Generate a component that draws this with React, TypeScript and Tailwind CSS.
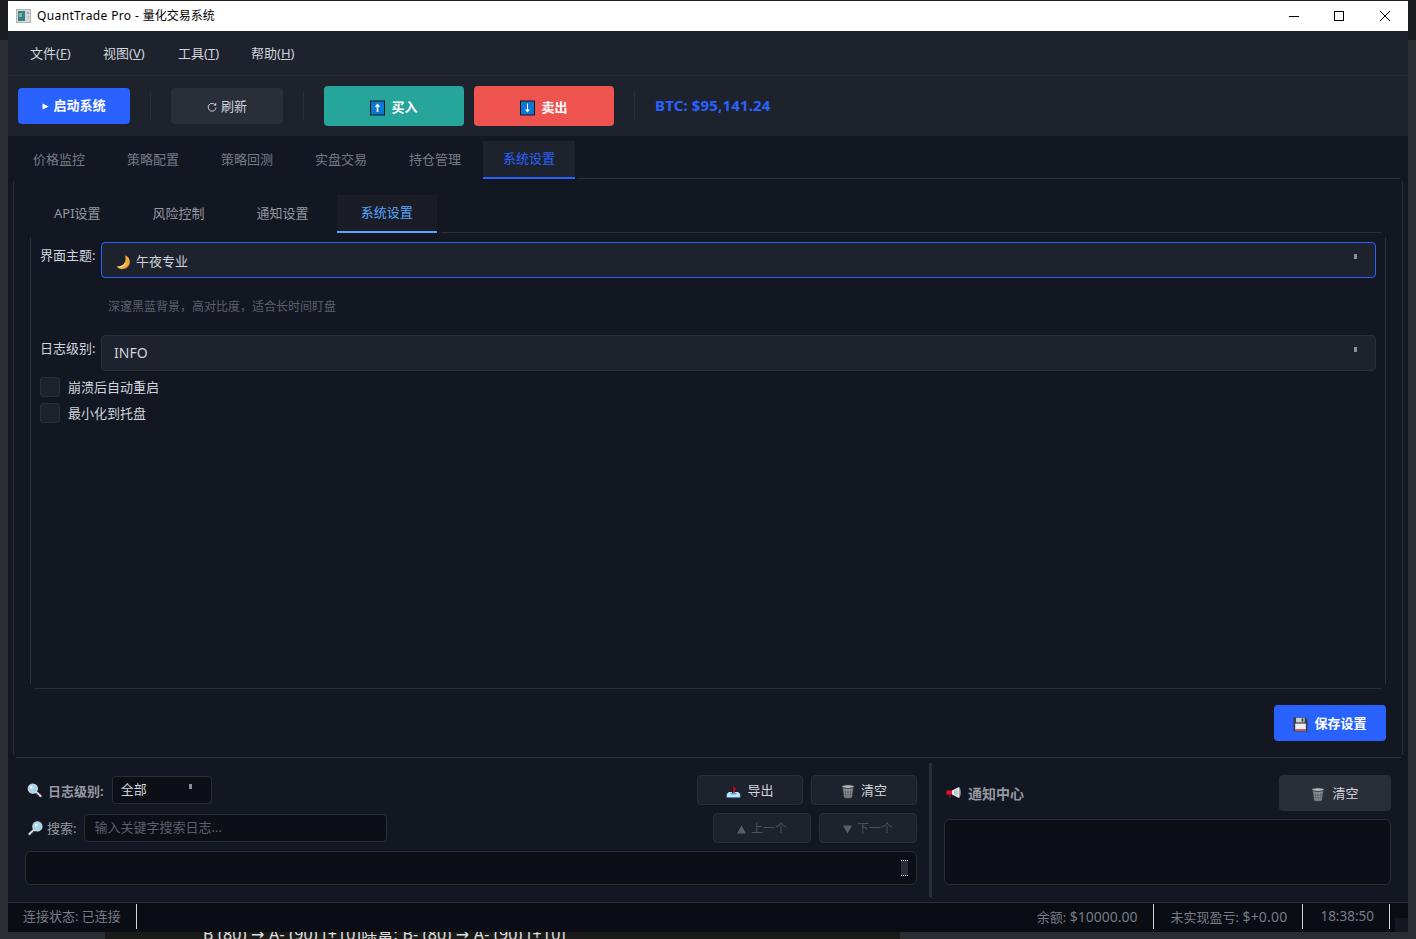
import React from "react";

const FONT = "font-['Noto_Sans','Noto_Sans_CJK_SC',sans-serif]";

const Moon = () => (
  <svg width="15" height="15" viewBox="0 0 15 15" className="shrink-0">
    <path d="M9 0.6 C13 1.6 15 6 13.2 9.8 C11.4 13.6 6.8 15 3.2 13.4 C2.2 13 1.4 12.2 0.8 11.2 C4.4 12 7.4 10.6 8.8 7.6 C9.8 5.4 9.8 2.8 9 0.6 Z" fill="#f4a93c" />
    <path d="M0.8 11.2 C4.4 12 7.4 10.6 8.8 7.6 L10 8.4 C8.4 11.8 4.6 13 2 12.4 Z" fill="#ffd27a" />
    <path d="M3.2 13.4 C6.8 15 11.4 13.6 13.2 9.8 L13.4 11 C11 14.4 6.4 15.4 3.2 13.4 Z" fill="#4a4a4a" />
  </svg>
);

const SearchLeft = () => (
  <svg width="15" height="15" viewBox="0 0 15 15" className="shrink-0">
    <path d="M8.4 8.6 L13.4 13" stroke="#d6d8dc" strokeWidth="2.4" strokeLinecap="round" />
    <path d="M9 10 L12.6 13.6" stroke="#55585e" strokeWidth="1" />
    <circle cx="5.8" cy="5.6" r="4.6" fill="#9fd4ec" stroke="#d5dde2" strokeWidth="1.1" />
    <circle cx="4.4" cy="4.2" r="1.5" fill="#e6f6fc" />
  </svg>
);

const SearchRight = () => (
  <svg width="15" height="15" viewBox="0 0 15 15" className="shrink-0">
    <path d="M6.4 8.6 L1.6 13" stroke="#d6d8dc" strokeWidth="2.4" strokeLinecap="round" />
    <path d="M6 10 L2.4 13.6" stroke="#55585e" strokeWidth="1" />
    <circle cx="9.4" cy="5.4" r="4.6" fill="#9fd4ec" stroke="#d5dde2" strokeWidth="1.1" />
    <circle cx="8.2" cy="4" r="1.5" fill="#e6f6fc" />
  </svg>
);

const Outbox = () => (
  <svg width="15" height="15" viewBox="0 0 15 15" className="shrink-0">
    <path d="M0.8 10 L3 8 H12 L14.2 10 V13.4 H0.8 Z" fill="#bfe6f7" />
    <path d="M0.8 13 H14.2 V14 H0.8 Z" fill="#3a86b8" />
    <path d="M4 9 H11 L10 10.6 H5 Z" fill="#4aa8dc" />
    <path d="M7.5 2 L10.8 5.4 H9 V8.8 H6 V5.4 H4.2 Z" fill="#a3121f" />
    <path d="M7.5 2 L4.2 5.4 H6 V8.8 H7 V2.6 Z" fill="#3a0a10" />
  </svg>
);

const Trash = () => (
  <svg width="14" height="15" viewBox="0 0 14 15" className="shrink-0">
    <ellipse cx="7" cy="2.6" rx="6" ry="1.7" fill="#b8bcbf" stroke="#3e4347" strokeWidth="0.6" />
    <path d="M1.6 3.6 L3 13.4 C3.6 14.4 10.4 14.4 11 13.4 L12.4 3.6 C10 4.8 4 4.8 1.6 3.6 Z" fill="#8b9194" stroke="#2d3135" strokeWidth="0.6" />
    <path d="M4 5.5 L5 13 M7 5.7 V13.4 M10 5.5 L9 13 M2.6 7.5 C6 8.6 8 8.6 11.4 7.5 M3 10.2 C6 11.2 8 11.2 11 10.2" stroke="#555b5f" strokeWidth="0.7" fill="none" />
  </svg>
);

const Megaphone = () => (
  <svg width="16" height="14" viewBox="0 0 16 14" className="shrink-0">
    <path d="M0.5 4.5 H6 V8.5 H0.5 Z" fill="#e8112d" />
    <path d="M2.5 8.5 H5 L4.4 11.6 H3 Z" fill="#8f1420" />
    <path d="M6 4.5 L13 1 V12 L6 8.5 Z" fill="#e4e6e8" />
    <path d="M13 1 C15.4 2.6 15.4 10.4 13 12 Z" fill="#9aa0a4" />
    <path d="M8 5 L11.5 3.4 V9.6 L8 8 Z" fill="#bfc3c6" />
  </svg>
);

const Floppy = () => (
  <svg width="15" height="15" viewBox="0 0 15 15" className="shrink-0">
    <path d="M0.5 0.5 H12.6 L14.5 2.4 V14.5 H0.5 Z" fill="#3a3f46" />
    <rect x="3" y="0.8" width="8.6" height="4.6" fill="#c9ced3" />
    <rect x="8.6" y="1.4" width="1.8" height="3.2" fill="#3a3f46" />
    <rect x="2.2" y="6.6" width="10.6" height="7" fill="#eceef0" />
    <rect x="2.2" y="12.2" width="10.6" height="1.4" fill="#d0314a" />
  </svg>
);

const ArrowBox = ({ down }: { down?: boolean }) => (
  <svg width="15" height="16" viewBox="0 0 15 16" className="shrink-0">
    <rect x="0" y="0.5" width="15" height="15" fill="#17171c" />
    <rect x="1" y="1.5" width="13" height="13" fill="#0b78d4" />
    {down ? (
      <path d="M7 3.5 H8 V9.5 H10 L7.5 12.5 L5 9.5 H7 Z" fill="#ffffff" />
    ) : (
      <path d="M7.5 3.5 L10.3 6.8 H8.3 V12 H6.7 V6.8 H4.7 Z" fill="#ffffff" />
    )}
  </svg>
);

const Refresh = () => (
  <svg width="10" height="10" viewBox="0 0 10 10" className="shrink-0">
    <path d="M8.4 3.2 A3.9 3.9 0 1 0 9 5.6" fill="none" stroke="#d1d4dc" strokeWidth="1" />
    <path d="M6.4 3.4 H9.2 V0.8 Z" fill="#d1d4dc" />
  </svg>
);

const Arrow = () => <span className="w-[3px] h-[5px] mb-[7px] bg-[#8a8e98] shrink-0" />;

function Select({ active, children }: { active?: boolean; children: React.ReactNode }) {
  return (
    <div
      className={
        "flex-1 h-9 rounded-[4px] bg-[#1e222d] border pl-3 pr-[18px] flex items-center justify-between text-[13px] text-[#d1d4dc] " +
        (active ? "border-[#2962ff]" : "border-[#2a2e39]")
      }
    >
      <div className="flex items-center gap-[5px]">{children}</div>
      <Arrow />
    </div>
  );
}

function Check({ label }: { label: string }) {
  return (
    <div className="flex items-center gap-2 h-5 text-[13px] text-[#d1d4dc]">
      <span className="w-5 h-5 rounded-[3px] bg-[#1e222d] border border-[#2a2e39]" />
      <span className="pt-[2px]">{label}</span>
    </div>
  );
}

function MainTab({ label, active }: { label: string; active?: boolean }) {
  return (
    <div
      className={
        "w-[92px] mr-[2px] h-[38px] flex items-center justify-center text-[13px] " +
        (active ? "bg-[#1e222d] text-[#2962ff] border-b-2 border-[#2962ff]" : "text-[#787b86]")
      }
    >
      {label}
    </div>
  );
}

function SubTab({ label, active }: { label: string; active?: boolean }) {
  return (
    <div
      className={
        "px-6 mr-1 h-[38px] flex items-center justify-center text-[13px] " +
        (active ? "bg-[#1a1d26] text-[#58a6ff] border-b-2 border-[#58a6ff]" : "text-[#9598a1]")
      }
    >
      {label}
    </div>
  );
}

function GhostBtn({ children, className }: { children: React.ReactNode; className: string }) {
  return (
    <div className={"h-[30px] rounded-[4px] border flex items-center justify-center " + className}>
      {children}
    </div>
  );
}

const Sep = () => <span className="block w-px h-[25px] bg-[#d4d4d4] shrink-0" />;

export default function App() {
  return (
    <div className={"w-[1416px] h-[939px] overflow-hidden pt-px bg-[linear-gradient(to_bottom,#1b1d21_40px,#2a2e33_40px)] " + FONT}>
      <div className="mx-2 h-[931px] flex flex-col bg-[#131722]">
        {/* title bar */}
        <div className="h-[30px] bg-white flex items-center shrink-0 pl-2 text-[12px] text-black">
          <svg width="15" height="14" viewBox="0 0 15 14" className="shrink-0">
            <rect x="0" y="0" width="15" height="14" fill="#d5dad8" stroke="#8d9693" />
            <rect x="2" y="2" width="7" height="10" fill="#3d7d83" />
            <rect x="3" y="4" width="3" height="4" fill="#79b6a8" />
            <rect x="10.5" y="3" width="3" height="2" fill="#8fb7c8" />
            <rect x="10.5" y="7" width="3" height="2" fill="#c7cfa8" />
          </svg>
          <span className="ml-[6px]"><span className="tracking-[0.37px]">QuantTrade Pro - </span>量化交易系统</span>
          <div className="flex-1" />
          <svg width="10" height="10" viewBox="0 0 10 10" className="mr-[35px]">
            <path d="M0 5.5 H10" stroke="#000" strokeWidth="1" />
          </svg>
          <svg width="10" height="10" viewBox="0 0 10 10" className="mr-[36px]">
            <rect x="0.5" y="0.5" width="9" height="9" fill="none" stroke="#000" strokeWidth="1" />
          </svg>
          <svg width="10" height="10" viewBox="0 0 10 10" className="mr-[18px]">
            <path d="M0 0 L10 10 M10 0 L0 10" stroke="#000" strokeWidth="1" />
          </svg>
        </div>

        {/* menu bar */}
        <div className="h-[45px] shrink-0 bg-[#1e222d] border-b border-[#2a2e39] flex items-center gap-8 pl-[22px] pt-px text-[13px] text-[#d1d4dc]">
          <span className="w-[41px] whitespace-nowrap">文件(<u>F</u>)</span>
          <span className="w-[43px] whitespace-nowrap">视图(<u>V</u>)</span>
          <span className="w-[41px] whitespace-nowrap">工具(<u>T</u>)</span>
          <span className="whitespace-nowrap">帮助(<u>H</u>)</span>
        </div>

        {/* toolbar */}
        <div className="h-[60px] shrink-0 bg-[#1e222d] flex items-center pl-[10px]">
          <div className="w-[112px] h-9 rounded-[4px] bg-[#2962ff] flex items-center justify-center gap-1 text-[13px] font-bold text-white">
            <svg width="7" height="7" viewBox="0 0 7 7" className="shrink-0"><path d="M0.5 0.5 L6.5 3.5 L0.5 6.5 Z" fill="#fff" /></svg>
            <span>启动系统</span>
          </div>
          <span className="w-px h-7 bg-[#2a2e39] ml-5" />
          <div className="ml-5 w-[112px] h-9 pt-[2px] rounded-[4px] bg-[#2a2e39] flex items-center justify-center gap-[4px] text-[13px] text-[#d1d4dc]">
            <Refresh />
            <span>刷新</span>
          </div>
          <span className="w-px h-7 bg-[#2a2e39] ml-5" />
          <div className="ml-5 w-[140px] h-10 pt-[3px] rounded-[4px] bg-[#26a69a] flex items-center justify-center gap-[6px] text-[13px] font-bold text-white">
            <ArrowBox />
            <span>买入</span>
          </div>
          <div className="ml-[10px] w-[140px] h-10 pt-[3px] rounded-[4px] bg-[#ef5350] flex items-center justify-center gap-[6px] text-[13px] font-bold text-white">
            <ArrowBox down />
            <span>卖出</span>
          </div>
          <span className="w-px h-7 bg-[#2a2e39] ml-5" />
          <span className="ml-5 mb-[2px] text-[15px] tracking-[0.15px] font-bold text-[#2962ff]">BTC: $95,141.24</span>
        </div>

        {/* main tabs */}
        <div className="h-[622px] shrink-0 pt-[5px] px-[5px] flex flex-col">
          <div className="flex h-[38px] shrink-0">
            <MainTab label="价格监控" />
            <MainTab label="策略配置" />
            <MainTab label="策略回测" />
            <MainTab label="实盘交易" />
            <MainTab label="持仓管理" />
            <MainTab label="系统设置" active />
            <div className="flex-1 border-b border-[#2a2e39] mr-[3px]" />
          </div>
          <div className="flex-1 min-h-0 flex flex-col">
            <div className="flex-1 min-h-0 mt-[2px] border-l border-r border-[#2a2e39] pt-[14px] px-4 flex flex-col">
              {/* sub tabs */}
              <div className="flex h-[38px] shrink-0">
                <SubTab label="API设置" />
                <SubTab label="风险控制" />
                <SubTab label="通知设置" />
                <SubTab label="系统设置" active />
                <div className="flex-1 border-b border-[#2a2e39] mr-[5px]" />
              </div>
              <div className="flex-1 min-h-0 flex flex-col">
                <div className="flex-1 min-h-0 mt-1 border-l border-r border-[#2a2e39] pt-[5px] pl-[9px] pr-[9px] flex flex-col">
                  <div className="flex">
                    <span className="w-[61px] shrink-0 pt-[4px] text-[13px] leading-[18px] text-[#d1d4dc]">界面主题:</span>
                    <Select active>
                      <span className="ml-[2px] mt-[4px]"><Moon /></span>
                      <span className="mt-[4px]">午夜专业</span>
                    </Select>
                  </div>
                  <div className="ml-[68px] mt-[20px] text-[12px] leading-[18px] text-[#5d606b]">深邃黑蓝背景，高对比度，适合长时间盯盘</div>
                  <div className="flex mt-[19px]">
                    <span className="w-[61px] shrink-0 pt-[4px] text-[13px] leading-[18px] text-[#d1d4dc]">日志级别:</span>
                    <Select>
                      <span className="-mt-[2px] text-[14px]">INFO</span>
                    </Select>
                  </div>
                  <div className="mt-[6px] flex flex-col gap-[6px]">
                    <Check label="崩溃后自动重启" />
                    <Check label="最小化到托盘" />
                  </div>
                </div>
                <div className="h-px mt-[4px] mx-[5px] bg-[#2a2e39] shrink-0" />
              </div>
              <div className="flex justify-end mt-4 mb-[14px] shrink-0">
                <div className="w-[112px] h-9 pt-[2px] rounded-[4px] bg-[#2962ff] flex items-center justify-center gap-[6px] text-[13px] font-bold text-white">
                  <Floppy />
                  <span>保存设置</span>
                </div>
              </div>
            </div>
            <div className="h-px mt-[2px] ml-[3px] mr-[2px] bg-[#2a2e39] shrink-0" />
          </div>
        </div>

        {/* log + notifications */}
        <div className="h-[144px] shrink-0 flex pt-[5px] pb-[5px]">
          <div className="w-[892px] ml-[17px] pt-3 shrink-0">
            <div className="flex items-center h-[30px] pl-[2px]">
              <SearchLeft />
              <span className="ml-[6px] mt-[3px] text-[13px] font-bold text-[#9598a1]">日志级别:</span>
              <div className="ml-2 w-[100px] h-7 rounded-[4px] bg-[#0c0f16] border border-[#2a2e39] flex items-center justify-between pl-2 pr-[19px] text-[13px] text-[#d1d4dc]">
                <span>全部</span>
                <span className="w-[3px] h-[5px] mb-[7px] bg-[#8a8e98]" />
              </div>
              <div className="flex-1" />
              <GhostBtn className="w-[106px] gap-[6px] pt-[2px] text-[13px] bg-[#1e222d] border-[#2a2e39] text-[#d1d4dc]">
                <Outbox />
                <span>导出</span>
              </GhostBtn>
              <GhostBtn className="w-[106px] ml-2 gap-[6px] pt-[2px] text-[13px] bg-[#1e222d] border-[#2a2e39] text-[#d1d4dc]">
                <Trash />
                <span>清空</span>
              </GhostBtn>
            </div>
            <div className="flex items-center h-[30px] mt-2 pl-[3px]">
              <SearchRight />
              <span className="ml-1 mt-[2px] text-[13px] text-[#9598a1]">搜索:</span>
              <div className="ml-2 w-[303px] h-7 rounded-[4px] bg-[#0c0f16] border border-[#2a2e39] flex items-center pl-[9px] text-[13px] text-[#5d606b]">
                输入关键字搜索日志...
              </div>
              <div className="flex-1" />
              <GhostBtn className="w-[98px] gap-[5px] pt-[2px] text-[12px] bg-[#1e222d] border-[#2a2e39] text-[#4c4f59]">
                <svg width="9" height="9" viewBox="0 0 9 9" className="shrink-0"><path d="M4.5 0.5 L9 8.5 H0 Z" fill="#5b5e66" /></svg>
                <span>上一个</span>
              </GhostBtn>
              <GhostBtn className="w-[98px] ml-2 gap-[5px] pt-[2px] text-[12px] bg-[#1e222d] border-[#2a2e39] text-[#4c4f59]">
                <svg width="9" height="9" viewBox="0 0 9 9" className="shrink-0"><path d="M0 0.5 H9 L4.5 8.5 Z" fill="#5b5e66" /></svg>
                <span>下一个</span>
              </GhostBtn>
            </div>
            <div className="mt-2 h-[34px] rounded-[6px] bg-[#0c0f16] border border-[#2a2e39] flex items-center justify-end pr-[8px]">
              <span className="w-[7px] h-[16px] border-y border-dotted border-white bg-[#2a2e39] flex justify-center" />
            </div>
          </div>
          <div className="w-[3px] ml-3 bg-[#2a2e39] shrink-0" />
          <div className="flex-1 ml-3 mr-[17px] pt-3 flex flex-col">
            <div className="flex items-center h-9 pl-[2px]">
              <Megaphone />
              <span className="ml-[6px] text-[14px] font-bold text-[#9598a1]">通知中心</span>
              <div className="flex-1" />
              <div className="w-[112px] h-9 rounded-[4px] bg-[#2a2e39] flex items-center justify-center gap-[7px] pt-[2px] text-[13px] text-[#d1d4dc]">
                <Trash />
                <span>清空</span>
              </div>
            </div>
            <div className="mt-2 h-[66px] rounded-[6px] bg-[#0c0f16] border border-[#2a2e39]" />
          </div>
        </div>

        {/* status bar */}
        <div className="h-[30px] shrink-0 bg-[#0a0d14] border-t border-[#2a2e39] flex items-center pl-[15px] pb-[2px] text-[13px] text-[#787b86] relative">
          <span>连接状态: 已连接</span>
          <span className="ml-[15px]"><Sep /></span>
          <div className="flex-1" />
          <span>余额: <span className="text-[14px]">$10000.00</span></span>
          <span className="ml-[15px]"><Sep /></span>
          <span className="ml-[17px]">未实现盈亏: <span className="text-[14px] tracking-[0.2px]">$+0.00</span></span>
          <span className="ml-[15px]"><Sep /></span>
          <span className="ml-[17px] text-[13.5px]">18:38:50</span>
          <span className="ml-[15px] mr-[18px]"><Sep /></span>
          <span className="absolute right-0 bottom-0 w-[13px] h-[14px] bg-[#131722]" />
        </div>
      </div>

      {/* window behind, peeking under the app */}
      <div className="flex h-[7px] overflow-hidden">
        <div className="w-[105px] bg-[#2a2e33]" />
        <div className="w-[795px] bg-[#1a1a1a] pl-[98px]">
          <div className="-mt-[7px] text-[16px] leading-[18px] tracking-[0.2px] whitespace-nowrap text-[#e0e0e0] font-['Noto_Sans','DejaVu_Sans','Noto_Sans_CJK_SC',sans-serif]">B (80) → A- (90) [+10]除富:  B- (80) → A- (90) [+10]</div>
        </div>
        <div className="flex-1 bg-[#2a2e33]" />
      </div>
    </div>
  );
}
